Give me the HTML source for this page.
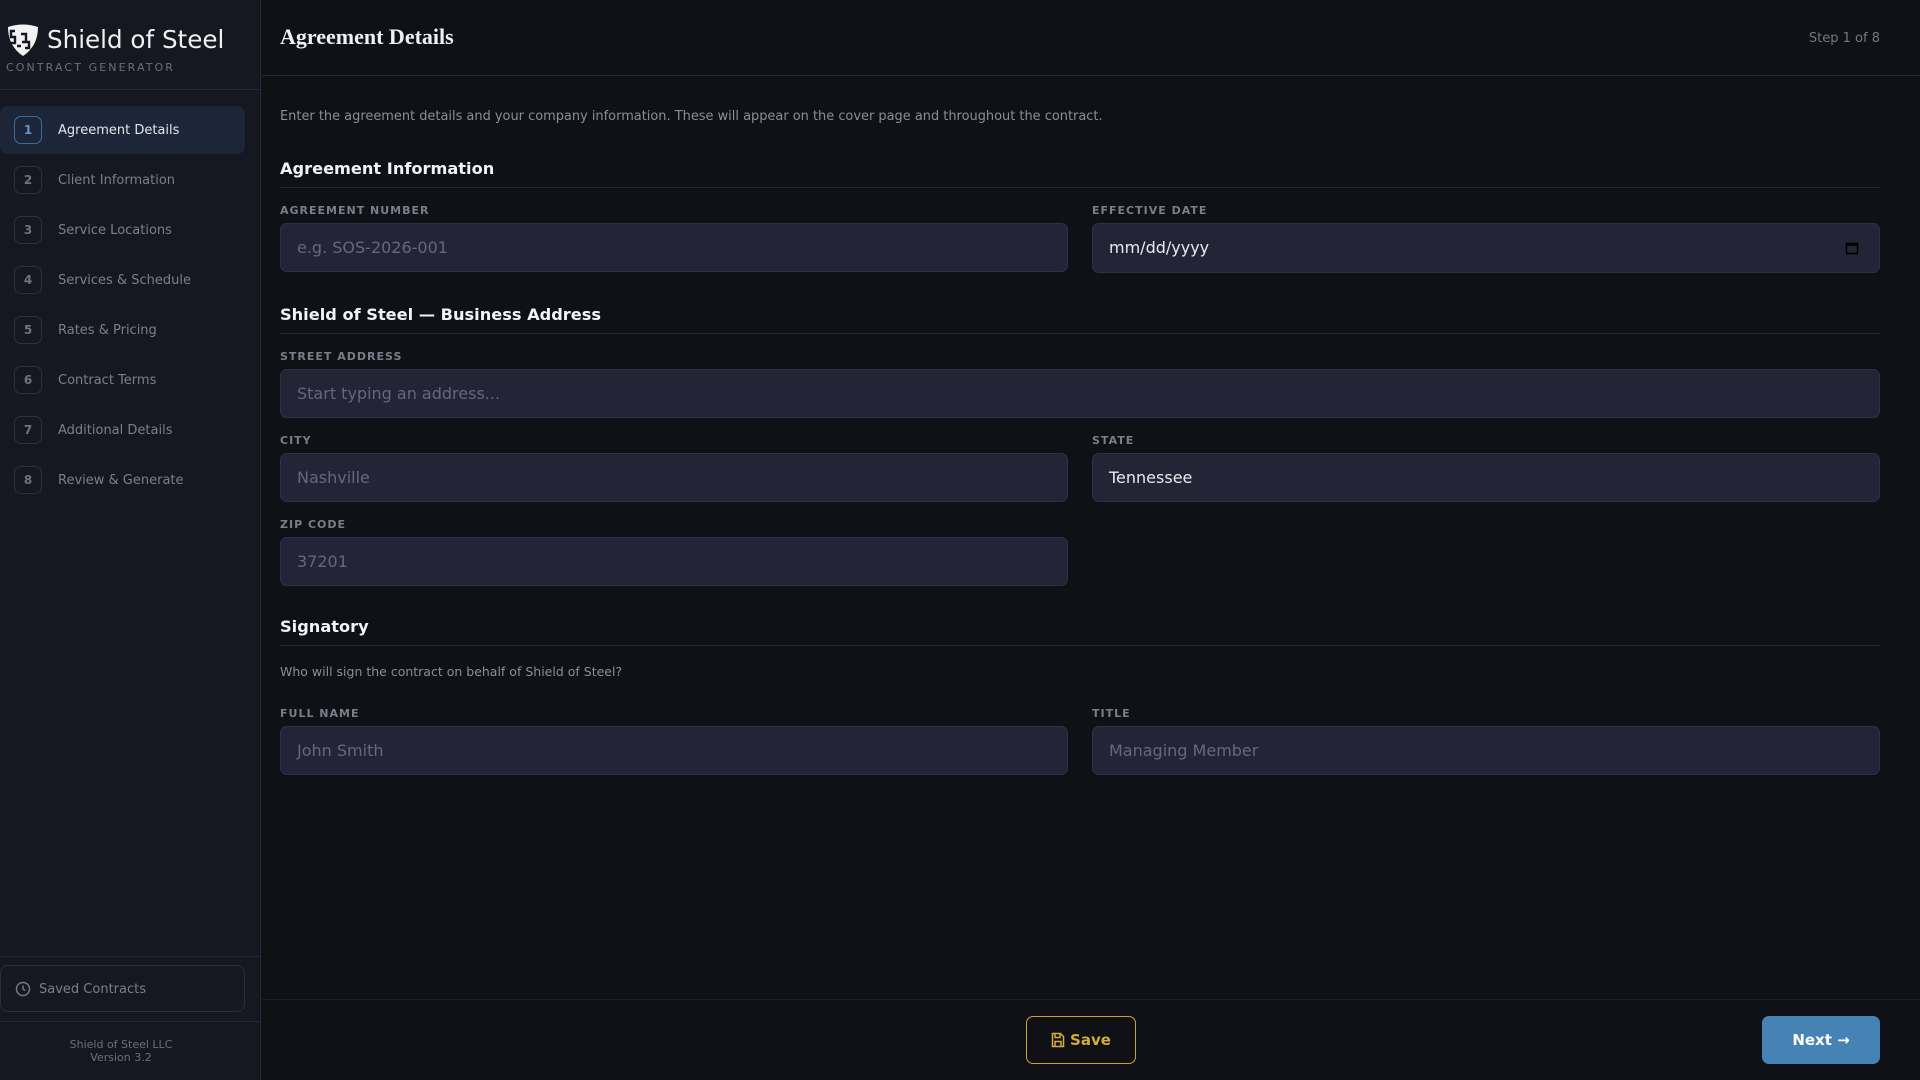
<!DOCTYPE html>
<html><head><meta charset="utf-8"><style>
*{box-sizing:border-box;margin:0;padding:0}
body{width:1920px;height:1080px;background:#0f1117;font-family:"DejaVu Sans","Liberation Sans",sans-serif;color:#e6e8ee;position:relative;overflow:hidden}
.abs{position:absolute}
#side{left:0;top:0;width:261px;height:1080px;background:#151821;border-right:1px solid #252834}
.logo{left:47px;top:25px;font-size:24.6px;color:#f0f0f0;font-family:"DejaVu Sans",sans-serif;letter-spacing:0px;font-weight:normal}
.sub{left:6px;top:61px;font-size:11px;color:#6b6f7c;letter-spacing:2.1px}
.hr{height:1px;background:#252834}
.item{left:0;width:245px;height:48px;border-radius:8px}
.num{position:absolute;left:14px;top:10px;width:28px;height:28px;border:1px solid #2c3040;border-radius:7px;font-size:12px;font-weight:bold;color:#6f7381;text-align:center;line-height:26px}
.lbl{position:absolute;left:58px;top:17px;font-size:13px;color:#7b7f8c}
.act{background:#1d2638}
.act .num{border-color:#3a6d99;color:#5b97cf}
.act .lbl{color:#e2e6ee}
h1{position:absolute;left:280px;top:24px;font-family:"Liberation Serif",serif;font-size:22px;font-weight:bold;color:#eef0f4}
.step{right:40px;top:31px;font-size:13px;color:#737785}
.intro{left:280px;top:109px;font-size:12.95px;color:#8a8e9a}
.h2{left:280px;font-size:16.2px;font-weight:bold;color:#f2f3f6}
.div{left:280px;width:1600px;height:1px;background:#222532}
.fl{font-size:11px;font-weight:bold;color:#7a7e8a;letter-spacing:1px}
.in{height:49px;background:#232536;border:1px solid #2f3244;border-radius:7px;font-size:16px;color:#646879;padding:13px 16px;line-height:21px}
.L{left:280px;width:788px}.R{left:1092px;width:788px}
.W{left:280px;width:1600px}
.val{color:#e8eaf0}
</style></head><body>
<div id="side" class="abs">
 <svg class="abs" style="left:5px;top:22px" width="36" height="36" viewBox="0 0 36 36"><path d="M3 5 Q18 0 33 5 Q33 24 18 34 Q3 24 3 5Z" fill="#f2f2f2"/><path d="M10 9h-4v6h4v6h-4M16 12h5v8h-4M20 20h4v6h-4M12 24h4" stroke="#151821" stroke-width="2.4" fill="none"/></svg>
 <div class="abs logo">Shield of Steel</div>
 <div class="abs sub">CONTRACT GENERATOR</div>
 <div class="abs hr" style="left:0;top:89px;width:261px"></div>
 <div class="abs item act" style="top:106px"><div class="num">1</div><div class="lbl">Agreement Details</div></div>
 <div class="abs item" style="top:156px"><div class="num">2</div><div class="lbl">Client Information</div></div>
 <div class="abs item" style="top:206px"><div class="num">3</div><div class="lbl">Service Locations</div></div>
 <div class="abs item" style="top:256px"><div class="num">4</div><div class="lbl">Services &amp; Schedule</div></div>
 <div class="abs item" style="top:306px"><div class="num">5</div><div class="lbl">Rates &amp; Pricing</div></div>
 <div class="abs item" style="top:356px"><div class="num">6</div><div class="lbl">Contract Terms</div></div>
 <div class="abs item" style="top:406px"><div class="num">7</div><div class="lbl">Additional Details</div></div>
 <div class="abs item" style="top:456px"><div class="num">8</div><div class="lbl">Review &amp; Generate</div></div>
 <div class="abs hr" style="left:0;top:956px;width:261px"></div>
 <div class="abs" style="left:0;top:965px;width:245px;height:47px;border:1px solid #2a2d3a;border-radius:8px"></div>
 <svg class="abs" style="left:15px;top:981px" width="16" height="16" viewBox="0 0 16 16"><circle cx="8" cy="8" r="6.5" stroke="#757986" stroke-width="1.5" fill="none"/><path d="M8 4.5V8l2.3 1.5" stroke="#757986" stroke-width="1.5" fill="none"/></svg>
 <div class="abs" style="left:39px;top:982px;font-size:13px;color:#7b7f8c">Saved Contracts</div>
 <div class="abs hr" style="left:0;top:1021px;width:261px"></div>
 <div class="abs" style="left:0;top:1038px;width:242px;text-align:center;font-size:11px;color:#6b6f7c;line-height:13px">Shield of Steel LLC<br>Version 3.2</div>
</div>
<h1>Agreement Details</h1>
<div class="abs step">Step 1 of 8</div>
<div class="abs hr" style="left:262px;top:75px;width:1658px"></div>
<div class="abs intro">Enter the agreement details and your company information. These will appear on the cover page and throughout the contract.</div>

<div class="abs h2" style="top:159px">Agreement Information</div>
<div class="abs div" style="top:187px"></div>
<div class="abs fl" style="left:280px;top:204px">AGREEMENT NUMBER</div>
<div class="abs fl" style="left:1092px;top:204px">EFFECTIVE DATE</div>
<div class="abs in L" style="top:223px">e.g. SOS-2026-001</div>
<div class="abs in R val" style="top:223px;height:50px">mm/dd/yyyy<svg style="position:absolute;right:20px;top:17px" width="14" height="14" viewBox="0 0 14 14"><rect x="1.5" y="2.5" width="11" height="10" fill="none" stroke="#000" stroke-width="1.6"/><rect x="1.5" y="2.5" width="11" height="2.5" fill="#000"/></svg></div>

<div class="abs h2" style="top:305px">Shield of Steel — Business Address</div>
<div class="abs div" style="top:333px"></div>
<div class="abs fl" style="left:280px;top:350px">STREET ADDRESS</div>
<div class="abs in W" style="top:369px">Start typing an address...</div>
<div class="abs fl" style="left:280px;top:434px">CITY</div>
<div class="abs fl" style="left:1092px;top:434px">STATE</div>
<div class="abs in L" style="top:453px">Nashville</div>
<div class="abs in R val" style="top:453px">Tennessee</div>
<div class="abs fl" style="left:280px;top:518px">ZIP CODE</div>
<div class="abs in L" style="top:537px">37201</div>

<div class="abs h2" style="top:617px">Signatory</div>
<div class="abs div" style="top:645px"></div>
<div class="abs" style="left:280px;top:664px;font-size:12.5px;color:#8a8e9a">Who will sign the contract on behalf of Shield of Steel?</div>
<div class="abs fl" style="left:280px;top:707px">FULL NAME</div>
<div class="abs fl" style="left:1092px;top:707px">TITLE</div>
<div class="abs in L" style="top:726px">John Smith</div>
<div class="abs in R" style="top:726px">Managing Member</div>

<div class="abs hr" style="left:262px;top:999px;width:1658px;background:#1e212b"></div>
<div class="abs" style="left:1026px;top:1016px;width:110px;height:48px;border:1px solid #c9a23a;border-radius:7px;color:#d4ab3c;font-size:15px;font-weight:bold;text-align:center;line-height:46px"><svg style="vertical-align:-3px;margin-right:5px" width="14" height="16" viewBox="0 0 14 16"><path d="M1.5 1.5h8l3 3v10h-11z M4 1.5v4h5v-4 M4 14.5v-5h6v5" fill="none" stroke="#d4ab3c" stroke-width="1.5"/></svg>Save</div>
<div class="abs" style="left:1762px;top:1016px;width:118px;height:48px;background:#4682b4;border-radius:7px;color:#fff;font-size:15px;font-weight:bold;text-align:center;line-height:48px">Next →</div>
</body></html>
